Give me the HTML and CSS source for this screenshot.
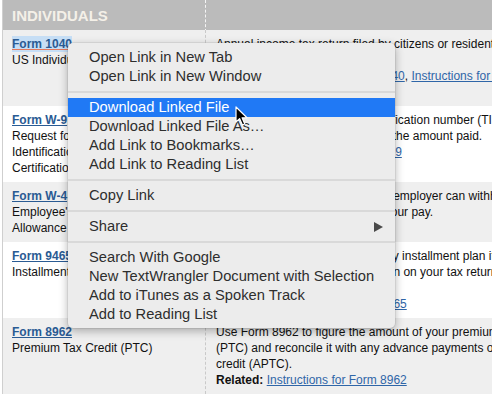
FILE: index.html
```html
<!DOCTYPE html>
<html lang="en">
<head>
  <meta charset="UTF-8">
  <title>Forms - Individuals</title>
  <link rel="stylesheet" href="styles.css">
</head>
<body>
  <div class="page">
    <div class="table">
      <div class="head">
        <div class="hcell name">INDIVIDUALS</div>
        <div class="hcell"></div>
      </div>

      <div class="row alt">
        <div class="cell name">
          <a class="form-link selected" href="#">Form 1040</a><br>
          US Individual Income Tax Return
        </div>
        <div class="cell desc">
          Annual income tax return filed by citizens or residents of the United<br>
          States.<br>
          <b>Related:</b> <a href="#">Schedule J for Form 1040</a>, <a href="#">Instructions for Form 1040</a>, <a href="#">Form 1040-V</a>,<br>
          <a href="#">Schedule 8812</a>
        </div>
      </div>

      <div class="row">
        <div class="cell name">
          <a class="form-link" href="#">Form W-9</a><br>
          Request for Taxpayer<br>
          Identification Number and<br>
          Certification
        </div>
        <div class="cell desc">
          Form W-9 provides all your identification number (TIN) to a payer or<br>
          to the requester who must report the amount paid.<br>
          <b>Related:</b> <a href="#">Instructions for Form W-9</a>
        </div>
      </div>

      <div class="row alt">
        <div class="cell name">
          <a class="form-link" href="#">Form W-4</a><br>
          Employee's Withholding<br>
          Allowance Certificate
        </div>
        <div class="cell desc">
          Complete Form W-4 so that your employer can withhold the<br>
          correct federal income tax from your pay.<br>
          <b>Related:</b> <a href="#">Publication 505</a>
        </div>
      </div>

      <div class="row">
        <div class="cell name">
          <a class="form-link" href="#">Form 9465</a><br>
          Installment Agreement Request
        </div>
        <div class="cell desc">
          Use this form to request a monthly installment plan if you cannot pay<br>
          the full amount you owe, as shown on your tax return or on a notice<br>
          we sent you.<br>
          <b>Related:</b> <a href="#">Instructions for Form 9465</a>
        </div>
      </div>

      <div class="row alt">
        <div class="cell name">
          <a class="form-link" href="#">Form 8962</a><br>
          Premium Tax Credit (PTC)
        </div>
        <div class="cell desc">
          Use Form 8962 to figure the amount of your premium tax credit<br>
          (PTC) and reconcile it with any advance payments of the premium tax<br>
          credit (APTC).<br>
          <b>Related:</b> <a href="#">Instructions for Form 8962</a>
        </div>
      </div>
    </div>

    <!-- context menu -->
    <div class="menu">
      <div class="item">Open Link in New Tab</div>
      <div class="item">Open Link in New Window</div>
      <div class="sep"></div>
      <div class="item active">Download Linked File</div>
      <div class="item">Download Linked File As…</div>
      <div class="item">Add Link to Bookmarks…</div>
      <div class="item">Add Link to Reading List</div>
      <div class="sep"></div>
      <div class="item">Copy Link</div>
      <div class="sep"></div>
      <div class="item sub">Share <span class="arrow"></span></div>
      <div class="sep"></div>
      <div class="item">Search With Google</div>
      <div class="item">New TextWrangler Document with Selection</div>
      <div class="item">Add to iTunes as a Spoken Track</div>
      <div class="item">Add to Reading List</div>
    </div>

    <svg class="cursor" width="14" height="21" viewBox="0 0 14 21">
      <path d="M1 1 L1 16 L4.6 12.6 L7.4 19 L9.8 18 L7.1 11.8 L12 11.8 Z" fill="#000" stroke="#fff" stroke-width="1.2" stroke-linejoin="round"/>
    </svg>
  </div>
</body>
</html>
```

FILE: styles.css
```css
body {
  margin: 0;
  font-family: "Liberation Sans", Arial, sans-serif;
  font-size: 12px;
  line-height: 16px;
  color: #111;
  background: #fff;
  overflow: hidden;
}
.page {
  position: relative;
  width: 492px;
  height: 396px;
  overflow: hidden;
  padding-left: 2px;
  box-sizing: border-box;
}
.table {
  width: 760px;
  border-left: 1px solid #cfcfcf;
}
.head {
  display: grid;
  grid-template-columns: 203px 1fr;
  height: 30px;
  background: #bbbbbb;
}
.hcell {
  padding-left: 9px;
  font-size: 15px;
  font-weight: bold;
  line-height: 32px;
  color: #f4f0e8;
}
.hcell.name {
  border-right: 1px dashed rgba(255, 255, 255, 0.85);
}
.row {
  display: grid;
  grid-template-columns: 203px 1fr;
  background: #fff;
}
.row.alt {
  background: #efefef;
}
.cell {
  padding: 6px 0 6px 9px;
}
.cell.name {
  border-right: 1px dashed #c9c9c9;
}
.cell.desc {
  padding-left: 10px;
  white-space: nowrap;
}
a {
  color: #2f66a8;
  text-decoration: underline;
}
.form-link {
  font-weight: bold;
  color: #2a5b93;
}
.form-link.selected {
  background: #c6def5;
  padding: 1px 0;
  text-decoration-color: #e2785c;
}

.menu {
  position: absolute;
  left: 68px;
  top: 43px;
  width: 327px;
  padding: 5px 0 4px;
  background: #ececec;
  border-radius: 5px;
  box-shadow: 0 3px 10px rgba(0, 0, 0, 0.3), 0 0 0 1px rgba(0, 0, 0, 0.06);
  font-size: 14.7px;
  color: #2e2e2e;
}
.item {
  height: 19px;
  line-height: 19px;
  padding-left: 21px;
  white-space: nowrap;
}
.item.active {
  background: #2079f5;
  color: #fff;
}
.item.sub {
  display: flex;
  justify-content: space-between;
  align-items: center;
  padding-right: 12px;
}
.arrow {
  width: 0;
  height: 0;
  border-left: 9px solid #4a4a4a;
  border-top: 5px solid transparent;
  border-bottom: 5px solid transparent;
}
.sep {
  height: 2px;
  margin: 5px 0;
  background: #d9d9d9;
}
.cursor {
  position: absolute;
  left: 235px;
  top: 106px;
}
```
